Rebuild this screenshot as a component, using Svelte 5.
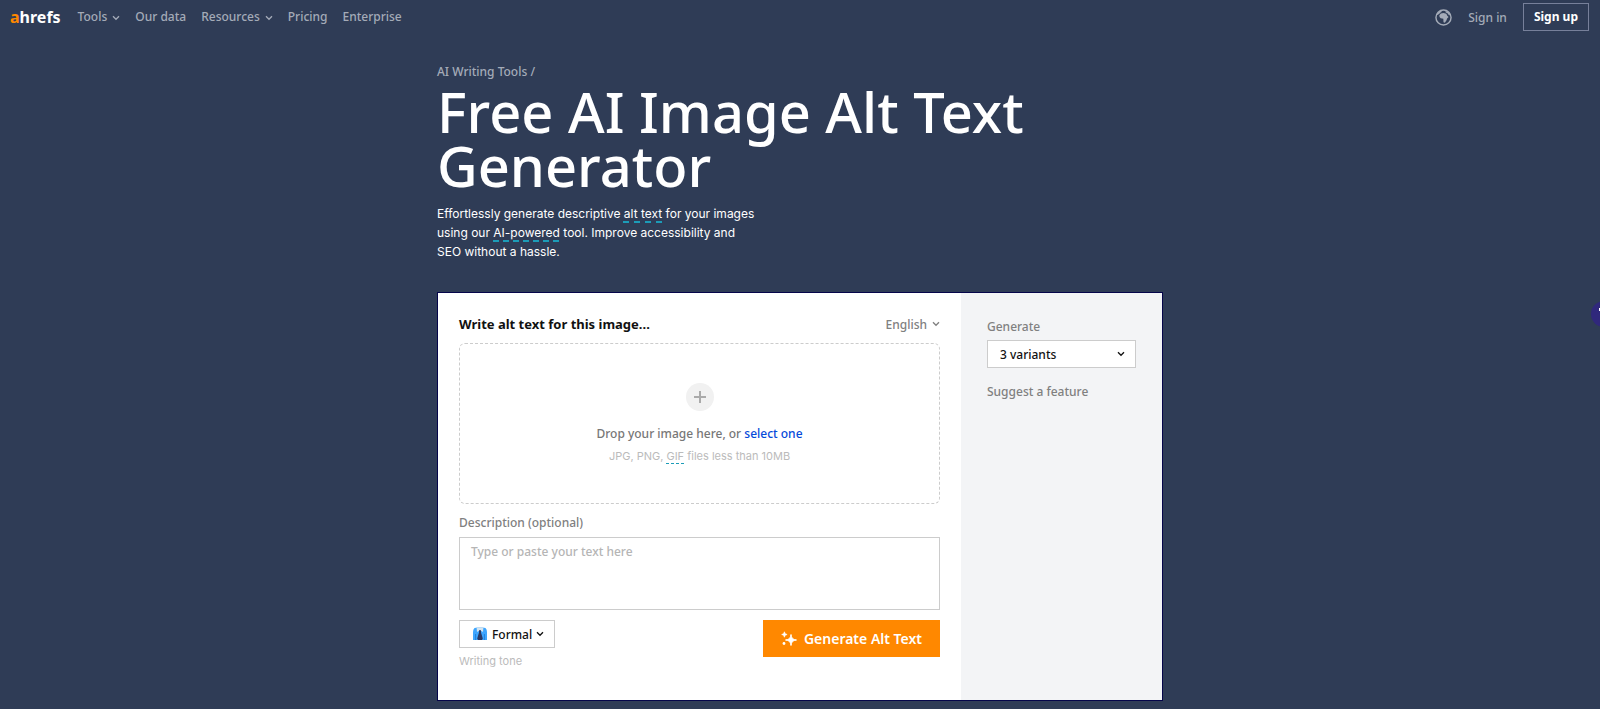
<script>
	const navLinks = [
		{ label: 'Tools', menu: true },
		{ label: 'Our data' },
		{ label: 'Resources', menu: true },
		{ label: 'Pricing' },
		{ label: 'Enterprise' }
	];

	let language = $state('English');
	let variants = $state('3');
	let tone = $state('Formal');
	let description = $state('');
</script>

<svelte:head><title>Free AI Image Alt Text Generator</title></svelte:head>

{#snippet chevron()}
	<svg class="chevron" viewBox="0 0 8 6" width="8" height="6" aria-hidden="true">
		<path d="M1 1.2 4 4.3 7 1.2" fill="none" stroke="currentColor" stroke-width="1.3" />
	</svg>
{/snippet}

<header class="topbar">
	<a class="logo" href="/"><span>a</span>hrefs</a>
	<nav>
		{#each navLinks as link}
			<a href="/">{link.label}{#if link.menu}{@render chevron()}{/if}</a>
		{/each}
	</nav>
	<div class="account">
		<button class="globe" aria-label="Change language">
			<svg viewBox="0 0 18 18" width="17" height="17">
				<circle cx="9" cy="9" r="8" fill="none" stroke="currentColor" stroke-width="1.5" />
				<path d="M1.500 7C2.200 4 4.400 2.200 6.800 1.500L7 3.200 5.400 4 4.400 5.400 2.800 6.200Z" fill="currentColor" />
				<path d="M4.600 6.600 6.200 4.800 9 4.200 12 5 13 7.200 14.400 8.400 12.800 10 12.200 12 10.400 14.600 9 14 8.800 10.400 6 9.800 4.800 8.400Z" fill="currentColor" />
				<path d="M11 1.800 14.400 3.400 16.200 6.600 14.800 6.600 13.200 4.400 11.400 3.600Z" fill="currentColor" />
			</svg>
		</button>
		<a href="/">Sign in</a>
		<a class="signup" href="/">Sign up</a>
	</div>
</header>

<main>
	<a class="crumb" href="/">AI Writing Tools /</a>
	<h1>Free AI Image Alt Text Generator</h1>
	<p class="intro">
		Effortlessly generate descriptive <span class="hint">alt text</span> for your images using our
		<span class="hint">AI-powered</span> tool. Improve accessibility and SEO without a hassle.
	</p>

	<div class="card">
		<section class="work">
			<div class="work-head">
				<h2>Write alt text for this image...</h2>
				<div class="picker language">
					<select bind:value={language} aria-label="Language">
						<option>English</option>
						<option>Spanish</option>
					</select>
					{@render chevron()}
				</div>
			</div>

			<div class="dropzone">
				<button class="add" aria-label="Add image">
					<svg viewBox="0 0 14 14" width="14" height="14">
						<path d="M7 1v12M1 7h12" stroke="currentColor" stroke-width="2" />
					</svg>
				</button>
				<p>Drop your image here, or <a href="/">select one</a></p>
				<small>JPG, PNG, <span class="hint">GIF</span> files less than 10MB</small>
			</div>

			<label class="field-label" for="description">Description (optional)</label>
			<textarea id="description" placeholder="Type or paste your text here" bind:value={description}></textarea>

			<div class="actions">
				<div class="tone">
					<div class="picker boxed">
						<svg class="shirt" viewBox="0 0 14 14" width="14" height="14" aria-hidden="true">
							<path d="M1.500 1 4.500.5h5l3 .5Q14 2.500 14 5v8H0V5q0-2.500 1.500-4Z" fill="#3ea6ff" />
							<path d="M2.600 7v6M11.400 7v6" stroke="#1976d2" stroke-width=".8" />
							<path d="M3.600.6h6.800L10 5 7 3.200 4 5Z" fill="#d5e4ee" />
							<path d="M6 3.200h2L8 5.500l1.800 6L9 13H5l-.8-1.500 1.800-6Z" fill="#2b3a66" />
						</svg>
						<select id="tone" bind:value={tone}>
							<option>Formal</option>
							<option>Casual</option>
						</select>
						{@render chevron()}
					</div>
					<label for="tone">Writing tone</label>
				</div>
				<button class="generate">
					<svg viewBox="0 0 16 16" width="16" height="16" aria-hidden="true">
						<path d="M10 3.500q.3 5.200 5.500 5.500-5.200.3-5.500 5.500-.3-5.200-5.500-5.500 5.200-.3 5.500-5.500Z" fill="#fff" stroke="#fff" stroke-width="1" />
						<path d="M3.400.8q.2 2.500 2.700 2.700-2.500.2-2.700 2.700-.2-2.500-2.700-2.700 2.500-.2 2.700-2.700Z" fill="#fff" stroke="#fff" stroke-width=".7" />
						<circle cx="3" cy="12.500" r="1.400" fill="#fff" />
					</svg>
					Generate Alt Text
				</button>
			</div>
		</section>

		<aside>
			<label class="field-label" for="variants">Generate</label>
			<div class="picker boxed wide">
				<select id="variants" bind:value={variants}>
					<option value="1">1 variant</option>
					<option value="3">3 variants</option>
				</select>
				{@render chevron()}
			</div>
			<a class="suggest" href="/">Suggest a feature</a>
		</aside>
	</div>
</main>

<button class="bubble" aria-label="Open assistant"><i></i></button>

<style>
	:global(body) {
		background: #2f3c56;
		font-family: 'Noto Sans', 'Open Sans', sans-serif;
		font-size: 12px;
		font-weight: 500;
		overflow-x: hidden;
	}
	a { color: inherit; text-decoration: none; }
	button, select, textarea { font: inherit; color: inherit; }
	button { border: 0; padding: 0; cursor: pointer; }
	.chevron { flex: none; }

	.topbar {
		display: flex;
		align-items: center;
		height: 34px;
		padding: 0 11px 0 10px;
		color: #a4abb8;
	}
	.logo { color: #fff; font-size: 16px; font-weight: 700; line-height: 20px; }
	.logo span { color: #ff8800; }
	nav { display: flex; gap: 15px; margin-left: 17px; line-height: 18px; }
	nav .chevron { margin-left: 5px; }
	.account { display: flex; align-items: center; gap: 16px; margin-left: auto; }
	.globe { display: flex; background: none; }
	.signup {
		border: 1px solid #77809a;
		padding: 0 10px;
		line-height: 26px;
		color: #fff;
		font-weight: 700;
	}

	main { max-width: 726px; margin: 0 auto; padding: 30px 0 8px; }
	.crumb { display: block; line-height: 16px; color: #a4abb8; }
	h1 { margin: 4px 0 12px; color: #fff; font-size: 56px; font-weight: 500; line-height: 54px; }
	.intro {
		max-width: 320px;
		margin: 0 0 31px;
		color: #fff;
		font-family: Inter, sans-serif;
		font-size: 12px;
		font-weight: 400;
		line-height: 19px;
	}
	.hint { text-decoration: underline dashed 2px #1c9cb8; text-underline-offset: 3px; }

	.card { display: flex; border: 1px solid #05054a; background: #fff; }
	.work { flex: 1; padding: 21px 21px 20px; }
	.work-head { display: flex; justify-content: space-between; align-items: center; height: 20px; margin-bottom: 9px; }
	h2 { margin: 0; color: #111; font-size: 13px; font-weight: 700; }

	.picker { position: relative; display: flex; align-items: center; box-sizing: border-box; }
	.picker select {
		appearance: none;
		field-sizing: content;
		border: 0;
		padding: 0 13px 0 0;
		background: none;
		outline: none;
	}
	.picker .chevron { position: absolute; right: 0; pointer-events: none; }
	.language { color: #808080; }
	.boxed { height: 28px; border: 1px solid #ccc; background: #fff; color: #111; }
	.boxed select { height: 26px; padding: 0 22px 0 32px; }
	.boxed .chevron { right: 10px; }
	.shirt { position: absolute; left: 13px; pointer-events: none; }
	.boxed.wide select { width: 100%; padding: 0 24px 0 12px; }

	.dropzone {
		display: flex;
		flex-direction: column;
		align-items: center;
		justify-content: center;
		box-sizing: border-box;
		height: 161px;
		border: 1px dashed #ccc;
		border-radius: 6px;
		color: #777;
	}
	.add {
		display: flex;
		align-items: center;
		justify-content: center;
		width: 28px;
		height: 28px;
		border-radius: 50%;
		background: #f1f1f1;
		color: #aaa;
	}
	.dropzone p { margin: 14px 0 5px; line-height: 18px; }
	.dropzone a { color: #054ada; }
	.dropzone small { color: #bbb; font-family: Inter, sans-serif; font-size: 11px; font-weight: 400; line-height: 16px; }
	.dropzone .hint { text-decoration-thickness: 1px; }

	.field-label { display: block; color: #808080; line-height: 16px; }
	.work .field-label { margin: 11px 0 6px; }
	textarea {
		display: block;
		box-sizing: border-box;
		width: 100%;
		height: 73px;
		margin-bottom: 10px;
		border: 1px solid #ccc;
		padding: 6px 11px;
		line-height: 16px;
		outline: none;
		resize: none;
	}
	textarea::placeholder { color: #b5b5b5; }

	.actions { display: flex; justify-content: space-between; align-items: flex-start; }
	.tone { display: flex; flex-direction: column; align-items: flex-start; gap: 5px; padding-bottom: 11px; }
	.tone label { color: #bbb; font-family: Inter, sans-serif; font-size: 11px; font-weight: 400; line-height: 16px; }
	.generate {
		display: flex;
		align-items: center;
		gap: 7px;
		height: 37px;
		padding: 0 18px;
		background: #ff8800;
		color: #fff;
		font-size: 14px;
		font-weight: 600;
	}

	aside { box-sizing: border-box; width: 201px; padding: 26px; background: #f3f4f6; }
	aside .field-label { margin-bottom: 5px; }
	.suggest { display: block; margin-top: 15px; color: #808080; line-height: 18px; }

	.bubble {
		position: fixed;
		right: -17px;
		top: 301px;
		width: 26px;
		height: 26px;
		border-radius: 50%;
		background: #30287c;
	}
	.bubble i { position: absolute; left: 8px; top: 7px; width: 1px; height: 3px; background: #fff; }
</style>
